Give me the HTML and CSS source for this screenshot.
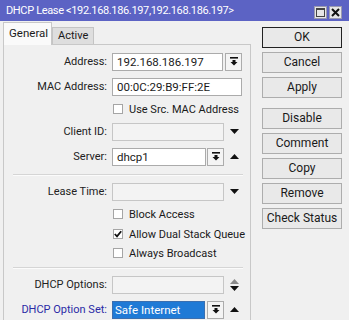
FILE: index.html
```html
<!DOCTYPE html>
<html lang="en">

<head>
    <meta charset="utf-8">
    <title>DHCP Lease</title>
    <link rel="stylesheet" href="styles.css">
</head>

<body>
    <div class="window">
        <div class="titlebar">
            <span class="title">DHCP Lease &lt;192.168.186.197,192.168.186.197&gt;</span>
            <div class="wbtns">
                <span class="wbtn">
                    <svg width="9" height="9" viewBox="0 0 9 9"><rect x="0.5" y="0.5" width="8" height="8" fill="none" stroke="#444"/><rect x="0" y="0" width="9" height="2" fill="#444"/></svg>
                </span>
                <span class="wbtn">
                    <svg width="9" height="9" viewBox="0 0 9 9"><path d="M1 1 L8 8 M8 1 L1 8" stroke="#111" stroke-width="2"/></svg>
                </span>
            </div>
        </div>

        <div class="main">
            <div class="left">
                <div class="tabs">
                    <div class="tab current">General</div>
                    <div class="tab">Active</div>
                </div>

                <div class="panel">
                    <div class="row">
                        <span class="label">Address:</span>
                        <span class="field w111">192.168.186.197</span>
                        <span class="dd"><svg width="8" height="9" viewBox="0 0 8 9"><rect x="0" y="0" width="8" height="1.6"/><path d="M2.5 3 H5.5 V5 H7.5 L4 8.5 L0.5 5 H2.5 Z"/></svg></span>
                    </div>
                    <div class="row">
                        <span class="label">MAC Address:</span>
                        <span class="field w130">00:0C:29:B9:FF:2E</span>
                    </div>
                    <div class="row check">
                        <span class="box"></span>
                        <span>Use Src. MAC Address</span>
                    </div>
                    <div class="row">
                        <span class="label">Client ID:</span>
                        <span class="field off w112"></span>
                        <svg class="arrow" width="9" height="5" viewBox="0 0 9 5"><path d="M0 0 H9 L4.5 5 Z"/></svg>
                    </div>
                    <div class="row">
                        <span class="label">Server:</span>
                        <span class="field w94">dhcp1</span>
                        <span class="dd tight"><svg width="8" height="9" viewBox="0 0 8 9"><rect x="0" y="0" width="8" height="1.6"/><path d="M2.5 3 H5.5 V5 H7.5 L4 8.5 L0.5 5 H2.5 Z"/></svg></span>
                        <svg class="arrow" width="9" height="5" viewBox="0 0 9 5"><path d="M0 5 H9 L4.5 0 Z"/></svg>
                    </div>

                    <div class="sep"></div>

                    <div class="row">
                        <span class="label">Lease Time:</span>
                        <span class="field off w112"></span>
                        <svg class="arrow" width="9" height="5" viewBox="0 0 9 5"><path d="M0 0 H9 L4.5 5 Z"/></svg>
                    </div>
                    <div class="row check">
                        <span class="box"></span>
                        <span>Block Access</span>
                    </div>
                    <div class="row check">
                        <span class="box"><svg width="8" height="8" viewBox="0 0 8 8"><path d="M0.8 4 L3 6.3 L7.2 1.2" fill="none" stroke="#111" stroke-width="1.8"/></svg></span>
                        <span>Allow Dual Stack Queue</span>
                    </div>
                    <div class="row check short">
                        <span class="box"></span>
                        <span>Always Broadcast</span>
                    </div>

                    <div class="sep"></div>

                    <div class="row">
                        <span class="label">DHCP Options:</span>
                        <span class="field off w112"></span>
                        <svg class="arrow" width="9" height="12" viewBox="0 0 9 12"><path d="M0 5 H9 L4.5 0 Z" fill="#8a8a8a"/><path d="M0 7 H9 L4.5 12 Z"/></svg>
                    </div>
                    <div class="row">
                        <span class="label blue">DHCP Option Set:</span>
                        <span class="field picked w93">Safe Internet</span>
                        <span class="dd"><svg width="8" height="9" viewBox="0 0 8 9"><rect x="0" y="0" width="8" height="1.6"/><path d="M2.5 3 H5.5 V5 H7.5 L4 8.5 L0.5 5 H2.5 Z"/></svg></span>
                        <svg class="arrow" width="9" height="5" viewBox="0 0 9 5"><path d="M0 5 H9 L4.5 0 Z"/></svg>
                    </div>
                </div>
            </div>

            <div class="buttons">
                <div class="btn default">OK</div>
                <div class="btn">Cancel</div>
                <div class="btn">Apply</div>
                <div class="btn spaced">Disable</div>
                <div class="btn">Comment</div>
                <div class="btn">Copy</div>
                <div class="btn">Remove</div>
                <div class="btn">Check Status</div>
            </div>
        </div>
    </div>
</body>

</html>
```

FILE: styles.css
```css
* {
    box-sizing: border-box;
}

body {
    margin: 0;
    font-family: Roboto, "Liberation Sans", sans-serif;
    font-size: 11px;
    color: #1a1a1a;
    background-color: #f0f0f0;
}

.window {
    width: 349px;
    height: 320px;
    overflow: hidden;
    background-color: #f0f0f0;
}

.titlebar {
    display: flex;
    align-items: center;
    height: 21px;
    padding: 0 7px 0 6px;
    background-color: #5c63c4;
    color: white;
}

.title {
    flex: 1;
    font-size: 11px;
    letter-spacing: -0.35px;
}

.wbtns {
    display: flex;
    gap: 2px;
    padding-top: 3px;
}

.wbtn {
    display: flex;
    align-items: center;
    justify-content: center;
    width: 13px;
    height: 13px;
    background-color: #e6e6e6;
    border: 1px solid #9a9ab0;
}

.main {
    display: flex;
}

/* tab panel */
.left {
    width: 248px;
    margin-left: 3px;
}

.tabs {
    display: flex;
    align-items: flex-end;
    height: 23px;
    padding-top: 1px;
}

.tab {
    height: 17px;
    padding: 0 5px;
    line-height: 16px;
    background-color: #dedede;
    border: 1px solid #c4c4c4;
    border-bottom: none;
}

.tab.current {
    height: 23px;
    width: 49px;
    margin-bottom: -1px;
    line-height: 21px;
    font-size: 11.5px;
    background-color: #fafafa;
    border-color: #c8c8c8;
    position: relative;
}

.panel {
    height: 276px;
    padding-top: 4px;
    border: 1px solid #c8c8c8;
    border-bottom: none;
    background-color: #f0f0f0;
}

.row {
    display: flex;
    align-items: center;
    height: 25px;
}

.row.check {
    height: 20px;
    padding-left: 109px;
}

.row.short {
    height: 18px;
}

.label {
    width: 103px;
    margin-right: 5px;
    text-align: right;
    color: #222;
}

.label.blue {
    color: #2b2ba6;
}

.field {
    height: 18px;
    padding: 0 4px;
    line-height: 16px;
    font-size: 11.5px;
    background-color: #fff;
    border: 1px solid #ababab;
}

.field.off {
    background-color: #f3f3f3;
    border-color: #c6c6c6;
}

.field.picked {
    background-color: #1f7ad6;
    color: white;
    border-color: #3a6fb0;
    padding-left: 2px;
}

.w93 { width: 93px; }
.w94 { width: 94px; }
.w111 { width: 111px; }
.w112 { width: 112px; }
.w130 { width: 130px; }

.dd {
    display: flex;
    align-items: center;
    justify-content: center;
    width: 17px;
    height: 18px;
    margin-left: 2px;
    background-color: #f4f4f4;
    border: 1px solid #acacac;
}

.dd.tight {
    margin-left: 1px;
}

.dd svg {
    fill: #111;
}

.arrow {
    margin-left: 6px;
    fill: #111;
}

.box {
    display: flex;
    align-items: center;
    justify-content: center;
    width: 10px;
    height: 10px;
    margin-right: 6px;
    background-color: #fff;
    border: 1px solid #a5a5a5;
}

.sep {
    height: 2px;
    margin: 5px 7px 3px 9px;
    border-top: 1px solid #d5d5d5;
    border-bottom: 1px solid #fbfbfb;
}

/* right column buttons */
.buttons {
    display: flex;
    flex-direction: column;
    gap: 4px;
    width: 80px;
    margin-left: 11px;
    padding-top: 6px;
}

.btn {
    height: 21px;
    line-height: 19px;
    text-align: center;
    font-size: 12px;
    background-color: #e9e9e9;
    border: 1px solid #adadad;
}

.btn.default {
    border-color: #222;
}

.btn.spaced {
    margin-top: 6px;
}
```
